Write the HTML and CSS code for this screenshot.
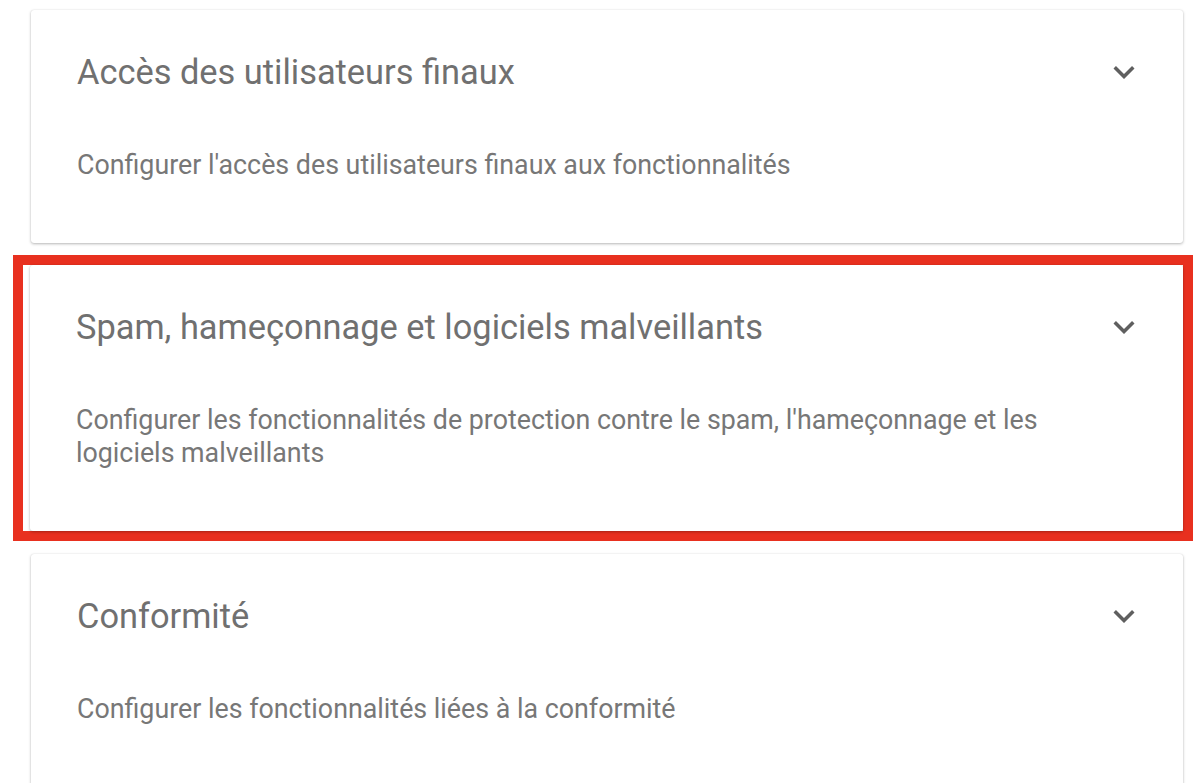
FILE: index.html
```html
<!DOCTYPE html>
<html lang="fr">
<head>
    <meta charset="UTF-8">
    <meta name="viewport" content="width=device-width, initial-scale=1.0">
    <title>Paramètres de sécurité</title>
    <link rel="stylesheet" href="styles.css">
</head>
<body>
    <div class="settings">
        <div class="card">
            <div class="card-body">
                <h2 class="card-title">Accès des utilisateurs finaux</h2>
                <p class="card-desc">Configurer l'accès des utilisateurs finaux aux fonctionnalités</p>
            </div>
            <svg class="card-toggle" viewBox="0 0 24 24"><path d="M16.59 8.59L12 13.17 7.41 8.59 6 10l6 6 6-6z"/></svg>
        </div>

        <!-- Highlighted section -->
        <div class="highlight">
            <div class="card">
                <div class="card-body">
                    <h2 class="card-title">Spam, hameçonnage et logiciels malveillants</h2>
                    <p class="card-desc">Configurer les fonctionnalités de protection contre le spam, l'hameçonnage et les logiciels malveillants</p>
                </div>
                <svg class="card-toggle" viewBox="0 0 24 24"><path d="M16.59 8.59L12 13.17 7.41 8.59 6 10l6 6 6-6z"/></svg>
            </div>
        </div>

        <div class="card">
            <div class="card-body">
                <h2 class="card-title">Conformité</h2>
                <p class="card-desc">Configurer les fonctionnalités liées à la conformité</p>
            </div>
            <svg class="card-toggle" viewBox="0 0 24 24"><path d="M16.59 8.59L12 13.17 7.41 8.59 6 10l6 6 6-6z"/></svg>
        </div>
    </div>
</body>
</html>
```

FILE: styles.css
```css
* {
    margin: 0;
    padding: 0;
    box-sizing: border-box;
}

body {
    background: #fff;
    font-family: Roboto, 'Noto Sans', Arial, sans-serif;
    overflow: hidden;
}

/* Settings list */
.settings {
    display: flex;
    flex-direction: column;
    gap: 12px;
    padding: 10px 17px 0 31px;
}

.card {
    display: flex;
    gap: 24px;
    background: #fff;
    border-radius: 3px;
    box-shadow: 0 1px 3px rgba(0, 0, 0, 0.28), 0 0 1px rgba(0, 0, 0, 0.12);
    padding: 42px 38px 61px 46px;
}

.card-body {
    flex: 1;
}

.card-title {
    font-size: 34.4px;
    line-height: 40px;
    font-weight: 400;
    color: #707070;
}

.card-desc {
    margin-top: 57px;
    font-size: 26.8px;
    line-height: 33px;
    color: #777;
}

.card-toggle {
    width: 42px;
    height: 42px;
    margin-top: -1px;
    fill: #5f5f5f;
    flex-shrink: 0;
}

/* Red frame around the selected section */
.highlight {
    border: 10px solid #e8301f;
    margin: 0 -10px 1px -18px;
    padding-left: 7px;
}
```
